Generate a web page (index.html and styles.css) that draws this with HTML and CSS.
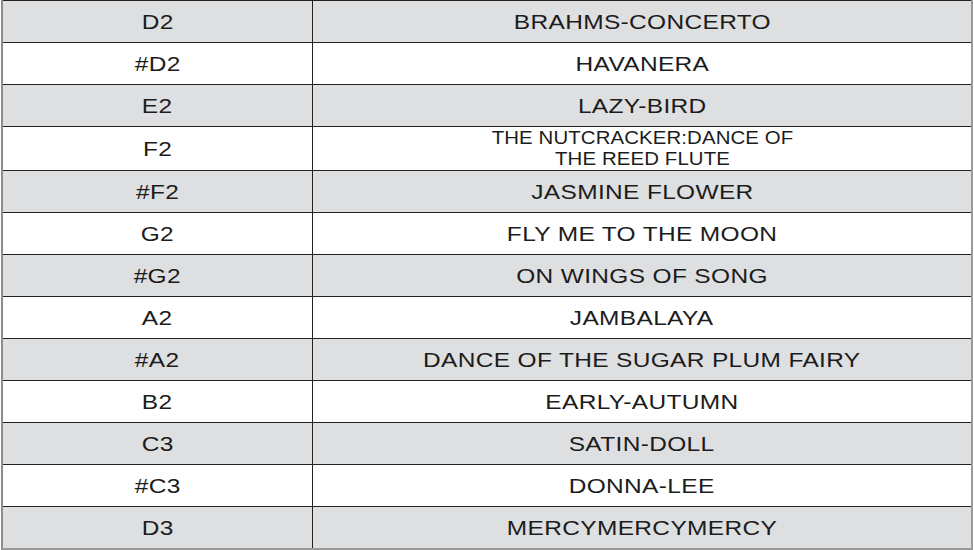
FILE: index.html
```html
<!DOCTYPE html>
<html>
<head>
<meta charset="utf-8">
<link rel="stylesheet" href="styles.css">
</head>
<body>
<div class="sheet">
  <div class="row"><div class="key"><span class="t">D2</span></div><div class="song"><span class="t">BRAHMS-CONCERTO</span></div></div>
  <div class="row"><div class="key"><span class="t">#D2</span></div><div class="song"><span class="t">HAVANERA</span></div></div>
  <div class="row"><div class="key"><span class="t">E2</span></div><div class="song"><span class="t">LAZY-BIRD</span></div></div>
  <div class="row"><div class="key"><span class="t">F2</span></div><div class="song"><span class="t small">THE NUTCRACKER:DANCE OF<br>THE REED FLUTE</span></div></div>
  <div class="row"><div class="key"><span class="t">#F2</span></div><div class="song"><span class="t">JASMINE FLOWER</span></div></div>
  <div class="row"><div class="key"><span class="t">G2</span></div><div class="song"><span class="t">FLY ME TO THE MOON</span></div></div>
  <div class="row"><div class="key"><span class="t">#G2</span></div><div class="song"><span class="t">ON WINGS OF SONG</span></div></div>
  <div class="row"><div class="key"><span class="t">A2</span></div><div class="song"><span class="t">JAMBALAYA</span></div></div>
  <div class="row"><div class="key"><span class="t">#A2</span></div><div class="song"><span class="t">DANCE OF THE SUGAR PLUM FAIRY</span></div></div>
  <div class="row"><div class="key"><span class="t">B2</span></div><div class="song"><span class="t">EARLY-AUTUMN</span></div></div>
  <div class="row"><div class="key"><span class="t">C3</span></div><div class="song"><span class="t">SATIN-DOLL</span></div></div>
  <div class="row"><div class="key"><span class="t">#C3</span></div><div class="song"><span class="t">DONNA-LEE</span></div></div>
  <div class="row"><div class="key"><span class="t">D3</span></div><div class="song"><span class="t">MERCYMERCYMERCY</span></div></div>
</div>
</body>
</html>
```
FILE: styles.css
```css
html, body {
  margin: 0;
  padding: 0;
  background: #ffffff;
}
.sheet {
  box-sizing: border-box;
  margin-left: 1px;
  width: 972px;
  height: 550px;
  display: grid;
  grid-template-rows: repeat(13, 1fr);
  border-left: 2px solid #8c8c8c;
  border-right: 2px solid #9a9a9a;
  border-bottom: 2px solid #9a9a9a;
  font-family: "Liberation Sans", Arial, sans-serif;
  color: #1c1c1c;
}
.row {
  display: grid;
  grid-template-columns: 310px 1fr;
  border-top: 1px solid #222222;
  background: #ffffff;
}
.row:nth-child(odd) {
  background: #dedfe0;
}
.key, .song {
  display: flex;
  align-items: center;
  justify-content: center;
}
.key {
  box-sizing: border-box;
  border-right: 1px solid #222222;
}
.t {
  display: inline-block;
  font-size: 21px;
  line-height: 22px;
  letter-spacing: 0.3px;
  transform: scaleX(1.165);
  text-align: center;
}
.t.small {
  font-size: 17.5px;
  line-height: 21px;
  letter-spacing: 0.1px;
  padding-top: 1px;
}
```
